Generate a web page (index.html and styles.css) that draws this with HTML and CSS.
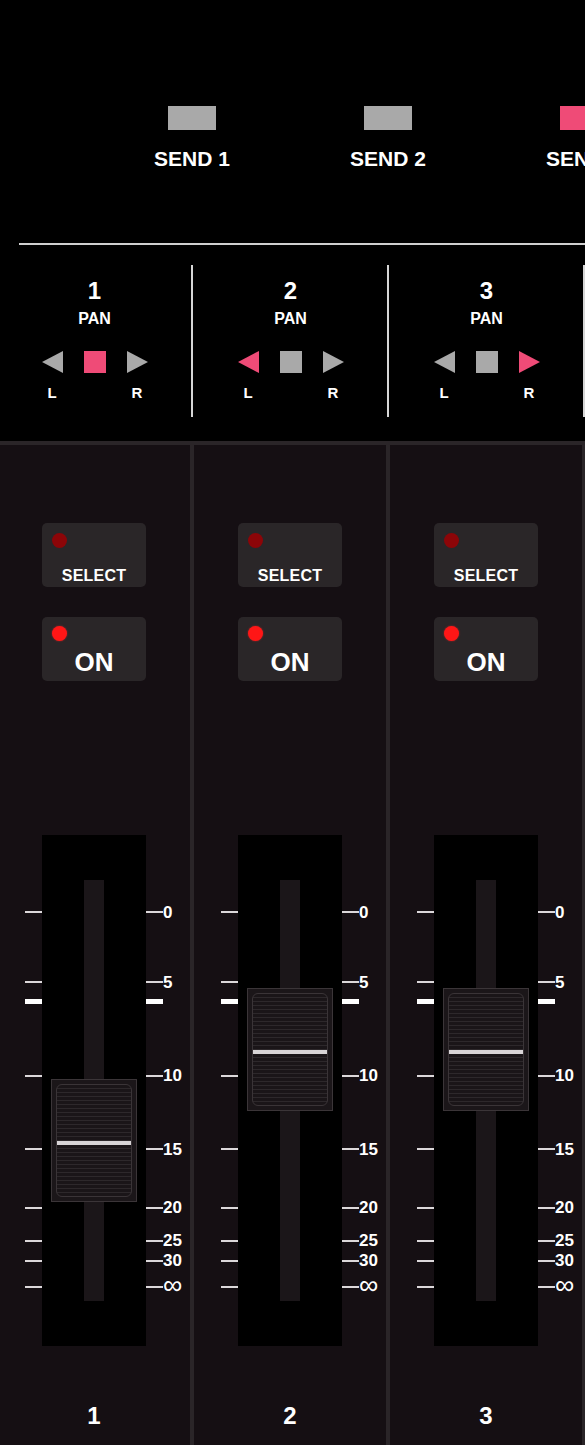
FILE: index.html
```html
<!DOCTYPE html>
<html>
<head>
<meta charset="utf-8">
<link rel="stylesheet" href="styles.css">
</head>
<body>
<div class="page">
  <div class="sends">
    <div class="send"><div class="send-box"></div><div class="send-label">SEND 1</div></div>
    <div class="send"><div class="send-box"></div><div class="send-label">SEND 2</div></div>
    <div class="send"><div class="send-box on"></div><div class="send-label">SEND 3</div></div>
  </div>
  <div class="hr"></div>
  <div class="pans">
    <div class="pan-col">
      <div class="pan-body">
        <div class="pan-num">1</div>
        <div class="pan-title">PAN</div>
        <div class="pan-ctrls">
          <div class="pan-side"><div class="tri-l"></div><div class="pan-lr">L</div></div>
          <div class="pan-sq on"></div>
          <div class="pan-side"><div class="tri-r"></div><div class="pan-lr">R</div></div>
        </div>
      </div>
      <div class="pan-sep"></div>
    </div>
    <div class="pan-col">
      <div class="pan-body">
        <div class="pan-num">2</div>
        <div class="pan-title">PAN</div>
        <div class="pan-ctrls">
          <div class="pan-side"><div class="tri-l on"></div><div class="pan-lr">L</div></div>
          <div class="pan-sq"></div>
          <div class="pan-side"><div class="tri-r"></div><div class="pan-lr">R</div></div>
        </div>
      </div>
      <div class="pan-sep"></div>
    </div>
    <div class="pan-col">
      <div class="pan-body">
        <div class="pan-num">3</div>
        <div class="pan-title">PAN</div>
        <div class="pan-ctrls">
          <div class="pan-side"><div class="tri-l"></div><div class="pan-lr">L</div></div>
          <div class="pan-sq"></div>
          <div class="pan-side"><div class="tri-r on"></div><div class="pan-lr">R</div></div>
        </div>
      </div>
      <div class="pan-sep"></div>
    </div>
  </div>

  <div class="strips">
    <!-- channel 1 -->
    <div class="strip">
      <div class="btn btn-select"><div class="led dim"></div><div class="btn-label">SELECT</div></div>
      <div class="btn btn-on"><div class="led lit"></div><div class="btn-label">ON</div></div>
      <div class="fader">
        <div class="track"><div class="slot"></div></div>
        <div class="mark" style="top:77px"><i class="tick"></i><i class="gap"></i><i class="tick r"></i><span class="num">0</span></div>
        <div class="mark" style="top:147px"><i class="tick"></i><i class="gap"></i><i class="tick r"></i><span class="num">5</span></div>
        <div class="mark" style="top:166.5px"><i class="tick thick"></i><i class="gap"></i><i class="tick r thick"></i></div>
        <div class="mark" style="top:240.5px"><i class="tick"></i><i class="gap"></i><i class="tick r"></i><span class="num">10</span></div>
        <div class="mark" style="top:314px"><i class="tick"></i><i class="gap"></i><i class="tick r"></i><span class="num">15</span></div>
        <div class="mark" style="top:372.5px"><i class="tick"></i><i class="gap"></i><i class="tick r"></i><span class="num">20</span></div>
        <div class="mark" style="top:405.5px"><i class="tick"></i><i class="gap"></i><i class="tick r"></i><span class="num">25</span></div>
        <div class="mark" style="top:425.5px"><i class="tick"></i><i class="gap"></i><i class="tick r"></i><span class="num">30</span></div>
        <div class="mark" style="top:451.5px"><i class="tick"></i><i class="gap"></i><i class="tick r"></i><span class="num inf">&#8734;</span></div>
        <div class="cap" style="top:244px"><div class="cap-inner"><div class="cap-line"></div></div></div>
      </div>
      <div class="strip-num">1</div>
    </div>
    <!-- channel 2 -->
    <div class="strip">
      <div class="btn btn-select"><div class="led dim"></div><div class="btn-label">SELECT</div></div>
      <div class="btn btn-on"><div class="led lit"></div><div class="btn-label">ON</div></div>
      <div class="fader">
        <div class="track"><div class="slot"></div></div>
        <div class="mark" style="top:77px"><i class="tick"></i><i class="gap"></i><i class="tick r"></i><span class="num">0</span></div>
        <div class="mark" style="top:147px"><i class="tick"></i><i class="gap"></i><i class="tick r"></i><span class="num">5</span></div>
        <div class="mark" style="top:166.5px"><i class="tick thick"></i><i class="gap"></i><i class="tick r thick"></i></div>
        <div class="mark" style="top:240.5px"><i class="tick"></i><i class="gap"></i><i class="tick r"></i><span class="num">10</span></div>
        <div class="mark" style="top:314px"><i class="tick"></i><i class="gap"></i><i class="tick r"></i><span class="num">15</span></div>
        <div class="mark" style="top:372.5px"><i class="tick"></i><i class="gap"></i><i class="tick r"></i><span class="num">20</span></div>
        <div class="mark" style="top:405.5px"><i class="tick"></i><i class="gap"></i><i class="tick r"></i><span class="num">25</span></div>
        <div class="mark" style="top:425.5px"><i class="tick"></i><i class="gap"></i><i class="tick r"></i><span class="num">30</span></div>
        <div class="mark" style="top:451.5px"><i class="tick"></i><i class="gap"></i><i class="tick r"></i><span class="num inf">&#8734;</span></div>
        <div class="cap" style="top:153px"><div class="cap-inner"><div class="cap-line"></div></div></div>
      </div>
      <div class="strip-num">2</div>
    </div>
    <!-- channel 3 -->
    <div class="strip">
      <div class="btn btn-select"><div class="led dim"></div><div class="btn-label">SELECT</div></div>
      <div class="btn btn-on"><div class="led lit"></div><div class="btn-label">ON</div></div>
      <div class="fader">
        <div class="track"><div class="slot"></div></div>
        <div class="mark" style="top:77px"><i class="tick"></i><i class="gap"></i><i class="tick r"></i><span class="num">0</span></div>
        <div class="mark" style="top:147px"><i class="tick"></i><i class="gap"></i><i class="tick r"></i><span class="num">5</span></div>
        <div class="mark" style="top:166.5px"><i class="tick thick"></i><i class="gap"></i><i class="tick r thick"></i></div>
        <div class="mark" style="top:240.5px"><i class="tick"></i><i class="gap"></i><i class="tick r"></i><span class="num">10</span></div>
        <div class="mark" style="top:314px"><i class="tick"></i><i class="gap"></i><i class="tick r"></i><span class="num">15</span></div>
        <div class="mark" style="top:372.5px"><i class="tick"></i><i class="gap"></i><i class="tick r"></i><span class="num">20</span></div>
        <div class="mark" style="top:405.5px"><i class="tick"></i><i class="gap"></i><i class="tick r"></i><span class="num">25</span></div>
        <div class="mark" style="top:425.5px"><i class="tick"></i><i class="gap"></i><i class="tick r"></i><span class="num">30</span></div>
        <div class="mark" style="top:451.5px"><i class="tick"></i><i class="gap"></i><i class="tick r"></i><span class="num inf">&#8734;</span></div>
        <div class="cap" style="top:153px"><div class="cap-inner"><div class="cap-line"></div></div></div>
      </div>
      <div class="strip-num">3</div>
    </div>
  </div>
</div>
</body>
</html>
```

FILE: styles.css
```css
html, body {
  margin: 0;
  padding: 0;
  background: #000;
}
body {
  width: 585px;
  height: 1445px;
  overflow: hidden;
  font-family: "Liberation Sans", Arial, sans-serif;
  font-weight: bold;
  color: #fff;
}
.page {
  width: 585px;
  height: 1445px;
  overflow: hidden;
}

/* sends */
.sends {
  display: flex;
  height: 243px;
  padding-left: 94px;
  box-sizing: border-box;
}
.send {
  flex: 0 0 196px;
  display: flex;
  flex-direction: column;
  align-items: center;
  padding-top: 106px;
}
.send-box {
  width: 48px;
  height: 24px;
  background: #a9a9a9;
}
.send-box.on { background: #ef4b77; }
.send-label {
  margin-top: 17px;
  font-size: 21px;
  line-height: 24px;
  white-space: nowrap;
}
.hr {
  margin-left: 19px;
  height: 2px;
  background: #cfcfcf;
}

/* pans */
.pans {
  display: flex;
  height: 196px;
  margin-left: -2px;
}
.pan-col {
  flex: 0 0 196px;
  display: flex;
  align-items: flex-start;
}
.pan-body {
  flex: 0 0 193px;
  display: flex;
  flex-direction: column;
  align-items: center;
  padding-top: 34px;
}
.pan-sep {
  flex: 0 0 2px;
  height: 152px;
  margin-top: 20px;
  background: #d6d6d6;
}
.pan-num {
  font-size: 24px;
  line-height: 24px;
}
.pan-title {
  margin-top: 7px;
  font-size: 16px;
  line-height: 18px;
}
.pan-ctrls {
  margin-top: 23px;
  display: flex;
  align-items: flex-start;
  gap: 21px;
}
.pan-side {
  display: flex;
  flex-direction: column;
  align-items: center;
  width: 21px;
}
.pan-lr {
  margin-top: 12px;
  font-size: 15px;
  line-height: 16px;
}
.tri-l, .tri-r {
  width: 0;
  height: 0;
  border-top: 11px solid transparent;
  border-bottom: 11px solid transparent;
}
.tri-l { border-right: 21px solid #a9a9a9; }
.tri-r { border-left: 21px solid #a9a9a9; }
.tri-l.on { border-right-color: #ef4b77; }
.tri-r.on { border-left-color: #ef4b77; }
.pan-sq {
  width: 22px;
  height: 22px;
  background: #a9a9a9;
}
.pan-sq.on { background: #ef4b77; }

/* strips */
.strips {
  display: flex;
  margin-left: -2px;
  border-top: 4px solid #2a2528;
  height: 1000px;
}
.strip {
  flex: 0 0 192px;
  border-right: 4px solid #2a2528;
  background: #150f13;
  display: flex;
  flex-direction: column;
  align-items: center;
  padding-top: 78px;
}
.btn {
  width: 104px;
  height: 64px;
  border-radius: 5px;
  background: #2a2628;
  display: flex;
  flex-direction: column;
  align-items: center;
}
.btn-on { margin-top: 30px; }
.led {
  align-self: flex-start;
  width: 15px;
  height: 15px;
  border-radius: 50%;
  margin: 10px 0 0 10px;
}
.led.dim { background: #8c0508; }
.led.lit {
  background: #ff1616;
  margin-top: 9px;
  box-shadow: 0 0 2px rgba(255, 40, 40, 0.6);
}
.btn-select .btn-label {
  margin-top: 20px;
  font-size: 16px;
  line-height: 16px;
  letter-spacing: 0.2px;
}
.btn-on .btn-label {
  margin-top: 8px;
  font-size: 26px;
  line-height: 26px;
}

/* fader */
.fader {
  position: relative;
  width: 192px;
  height: 511px;
  margin-top: 154px;
}
.track {
  width: 104px;
  height: 511px;
  margin: 0 auto;
  background: #000;
  padding-top: 45px;
  box-sizing: border-box;
}
.slot {
  width: 20px;
  height: 421px;
  margin: 0 auto;
  background: #1b1619;
}
.mark {
  position: absolute;
  left: 27px;
  height: 0;
  display: flex;
  align-items: center;
}
.mark i { display: block; }
.tick {
  width: 17px;
  height: 2px;
  background: #dcd8da;
}
.tick.r { width: 17px; }
.tick.thick {
  height: 5px;
  background: #fff;
}
.gap { width: 104px; height: 1px; }
.num {
  font-size: 17px;
  line-height: 17px;
  white-space: nowrap;
}
.num.inf {
  font-size: 27px;
  line-height: 12px;
  font-weight: normal;
  position: relative;
  top: -2px;
}
.cap {
  position: absolute;
  left: 53px;
  width: 86px;
  height: 123px;
  box-sizing: border-box;
  border: 1px solid #3b3538;
  background: #1b1619;
  padding: 4px;
}
.cap-inner {
  height: 113px;
  box-sizing: border-box;
  border: 1px solid #3a3437;
  border-radius: 6px;
  background: repeating-linear-gradient(to bottom, #1a1518 0px, #1a1518 3px, #2d282b 3px, #2d282b 4px);
  padding-top: 56px;
}
.cap-line {
  width: 74px;
  height: 4px;
  background: #d8d4d6;
}
.strip-num {
  margin-top: 58px;
  font-size: 24px;
  line-height: 24px;
}
```
